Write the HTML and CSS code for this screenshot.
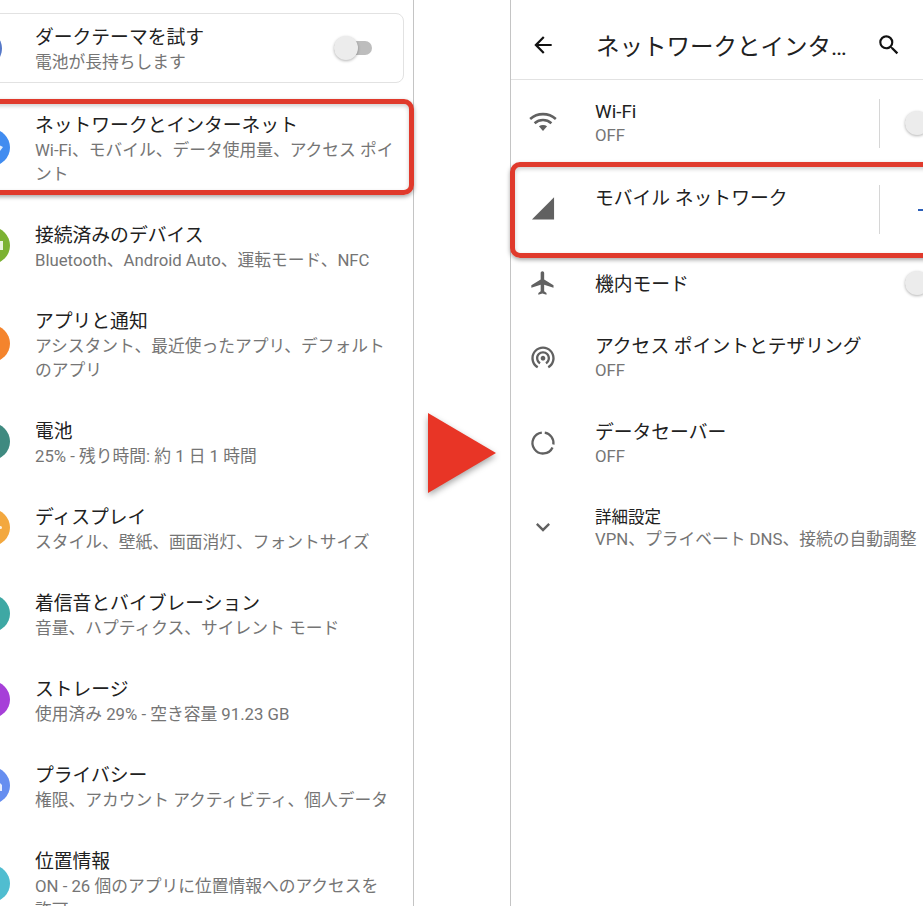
FILE: index.html
```html
<!DOCTYPE html>
<html lang="ja">
<head>
    <meta charset="UTF-8">
    <meta name="viewport" content="width=device-width, initial-scale=1.0">
    <title>ネットワークとインターネット</title>
    <link rel="stylesheet" href="styles.css">
</head>
<body>
    <!-- settings top level -->
    <div class="panel-left">
        <div class="suggest-card">
            <svg class="dot-icon dot-card" viewBox="0 0 37 37"><circle cx="18.5" cy="18.5" r="18.5"/></svg>
            <div class="row-text">
                <div class="row-title">ダークテーマを試す</div>
                <div class="row-sub">電池が長持ちします</div>
            </div>
            <div class="toggle"><div class="toggle-thumb"></div></div>
        </div>

        <div class="set-row marked">
            <svg class="dot-icon dot-blue" viewBox="0 0 37 37"><circle cx="18.5" cy="18.5" r="18.5"/><path class="glyph" d="M27 16.500l3 1.500-3 4z"/></svg>
            <div class="row-text">
                <div class="row-title">ネットワークとインターネット</div>
                <div class="row-sub">Wi-Fi、モバイル、データ使用量、アクセス ポイント</div>
            </div>
            <div class="highlight"></div>
        </div>
        <div class="set-row">
            <svg class="dot-icon dot-green" viewBox="0 0 37 37"><circle cx="18.5" cy="18.5" r="18.5"/><rect class="glyph" x="24" y="14" width="6" height="9"/></svg>
            <div class="row-text">
                <div class="row-title">接続済みのデバイス</div>
                <div class="row-sub">Bluetooth、Android Auto、運転モード、NFC</div>
            </div>
        </div>
        <div class="set-row">
            <svg class="dot-icon dot-orange" viewBox="0 0 37 37"><circle cx="18.5" cy="18.5" r="18.5"/></svg>
            <div class="row-text">
                <div class="row-title">アプリと通知</div>
                <div class="row-sub">アシスタント、最近使ったアプリ、デフォルトのアプリ</div>
            </div>
        </div>
        <div class="set-row">
            <svg class="dot-icon dot-teal" viewBox="0 0 37 37"><circle cx="18.5" cy="18.5" r="18.5"/></svg>
            <div class="row-text">
                <div class="row-title">電池</div>
                <div class="row-sub">25% - 残り時間: 約 1 日 1 時間</div>
            </div>
        </div>
        <div class="set-row">
            <svg class="dot-icon dot-amber" viewBox="0 0 37 37"><circle cx="18.5" cy="18.5" r="18.5"/><circle class="glyph" cx="27.500" cy="18.500" r="1.500"/></svg>
            <div class="row-text">
                <div class="row-title">ディスプレイ</div>
                <div class="row-sub">スタイル、壁紙、画面消灯、フォントサイズ</div>
            </div>
        </div>
        <div class="set-row">
            <svg class="dot-icon dot-sea" viewBox="0 0 37 37"><circle cx="18.5" cy="18.5" r="18.5"/></svg>
            <div class="row-text">
                <div class="row-title">着信音とバイブレーション</div>
                <div class="row-sub">音量、ハプティクス、サイレント モード</div>
            </div>
        </div>
        <div class="set-row">
            <svg class="dot-icon dot-purple" viewBox="0 0 37 37"><circle cx="18.5" cy="18.5" r="18.5"/></svg>
            <div class="row-text">
                <div class="row-title">ストレージ</div>
                <div class="row-sub">使用済み 29% - 空き容量 91.23 GB</div>
            </div>
        </div>
        <div class="set-row">
            <svg class="dot-icon dot-indigo" viewBox="0 0 37 37"><circle cx="18.5" cy="18.5" r="18.5"/><path class="glyph" d="M27 16l2 2v6h-2z"/></svg>
            <div class="row-text">
                <div class="row-title">プライバシー</div>
                <div class="row-sub">権限、アカウント アクティビティ、個人データ</div>
            </div>
        </div>
        <div class="set-row">
            <svg class="dot-icon dot-cyan" viewBox="0 0 37 37"><circle cx="18.5" cy="18.5" r="18.5"/></svg>
            <div class="row-text">
                <div class="row-title">位置情報</div>
                <div class="row-sub">ON - 26 個のアプリに位置情報へのアクセスを許可</div>
            </div>
        </div>
    </div>

    <div class="arrow-col">
        <svg class="next-arrow" viewBox="0 0 68 80"><polygon points="0,0 68,40 0,80"/></svg>
    </div>

    <!-- network detail screen -->
    <div class="panel-right">
        <div class="top-bar">
            <svg class="bar-icon" viewBox="0 0 24 24"><path d="M20 11H7.830l5.590-5.590L12 4l-8 8 8 8 1.410-1.410L7.830 13H20v-2z"/></svg>
            <div class="bar-title">ネットワークとインタ…</div>
            <svg class="bar-icon" viewBox="0 0 24 24"><path d="M15.500 14h-.79l-.28-.27A6.470 6.470 0 0 0 16 9.500 6.500 6.500 0 1 0 9.500 16c1.610 0 3.090-.59 4.230-1.570l.27.28v.79l5 4.990L20.490 19l-4.990-5zm-6 0C7.010 14 5 11.990 5 9.500S7.010 5 9.500 5 14 7.010 14 9.500 11.990 14 9.500 14z"/></svg>
        </div>

        <div class="net-row">
            <svg class="net-icon wifi-icon" viewBox="0 0 24 24"><path d="M1 8.500C7.300 3 16.700 3 23 8.500M4.800 12.200c4.200-3.600 10.200-3.600 14.400 0"/><path class="solid" d="M8.500 14.700c2.100-1.400 4.900-1.400 7 0L12 18.800z"/></svg>
            <div class="row-text wifi-text">
                <div class="row-title">Wi-Fi</div>
                <div class="row-sub">OFF</div>
            </div>
            <div class="net-divider"></div>
            <div class="toggle"><div class="toggle-thumb"></div></div>
        </div>
        <div class="net-row marked">
            <svg class="net-icon" viewBox="0 0 24 24"><path d="M2.500 21h19V2z"/></svg>
            <div class="row-text">
                <div class="row-title">モバイル ネットワーク</div>
            </div>
            <div class="net-divider"></div>
            <div class="plus-mark"></div>
            <div class="highlight"></div>
        </div>
        <div class="net-row plain">
            <svg class="net-icon" viewBox="0 0 24 24"><path d="M21 16v-2l-8-5V3.500c0-.83-.67-1.500-1.500-1.500S10 2.670 10 3.500V9l-8 5v2l8-2.500V19l-2 1.500V22l3.500-1 3.500 1v-1.500L13 19v-5.500l8 2.500z"/></svg>
            <div class="row-text">
                <div class="row-title">機内モード</div>
            </div>
            <div class="toggle"><div class="toggle-thumb"></div></div>
        </div>
        <div class="net-row">
            <svg class="net-icon" viewBox="0 0 24 24"><path d="M12 11c-1.100 0-2 .9-2 2s.9 2 2 2 2-.9 2-2-.9-2-2-2zm6 2c0-3.310-2.690-6-6-6s-6 2.690-6 6c0 2.220 1.210 4.150 3 5.190l1-1.740c-1.190-.7-2-1.970-2-3.450 0-2.210 1.790-4 4-4s4 1.790 4 4c0 1.480-.81 2.750-2 3.450l1 1.740c1.790-1.040 3-2.970 3-5.190zM12 3C6.480 3 2 7.480 2 13c0 3.700 2.010 6.920 4.990 8.650l1-1.730C5.610 18.530 4 15.960 4 13c0-4.420 3.580-8 8-8s8 3.580 8 8c0 2.960-1.610 5.530-4 6.920l1 1.730c2.990-1.730 5-4.950 5-8.650 0-5.520-4.480-10-10-10z"/></svg>
            <div class="row-text">
                <div class="row-title">アクセス ポイントとテザリング</div>
                <div class="row-sub">OFF</div>
            </div>
        </div>
        <div class="net-row">
            <svg class="net-icon saver-icon" viewBox="0 0 24 24"><path d="M11 3.060A9 9 0 1 0 20.160 15.800M13.500 3.130A9 9 0 0 1 20.900 13.300"/></svg>
            <div class="row-text">
                <div class="row-title">データセーバー</div>
                <div class="row-sub">OFF</div>
            </div>
        </div>
        <div class="net-row small">
            <svg class="net-icon" viewBox="0 0 24 24"><path d="M7.410 8.590 12 13.170l4.590-4.580L18 10l-6 6-6-6z"/></svg>
            <div class="row-text">
                <div class="row-title">詳細設定</div>
                <div class="row-sub">VPN、プライベート DNS、接続の自動調整</div>
            </div>
        </div>
    </div>
</body>
</html>
```

FILE: styles.css
```css
* {
    margin: 0;
    padding: 0;
    box-sizing: border-box;
}

body {
    font-family: Roboto, 'Noto Sans CJK JP', sans-serif;
    background: white;
    display: flex;
    height: 906px;
    overflow: hidden;
}

.panel-left {
    flex: none;
    width: 414px;
    padding-top: 13px;
    border-right: 1px solid #c4c4c4;
}

.panel-right {
    flex: none;
    width: 480px;
    border-left: 1px solid #c4c4c4;
}

.arrow-col {
    flex: none;
    width: 96px;
    display: flex;
    align-items: center;
    justify-content: center;
}

.next-arrow {
    width: 68px;
    height: 80px;
    fill: #e83526;
    filter: drop-shadow(0 3px 3px rgba(0,0,0,0.35));
}

.row-title {
    font-size: 18.8px;
    line-height: 24px;
    color: #212121;
}

.row-sub {
    font-size: 16.75px;
    line-height: 24px;
    color: #757575;
}

.suggest-card {
    display: flex;
    align-items: center;
    height: 70px;
    margin: 0 9px 5px -20px;
    border: 1px solid #e2e2e2;
    border-radius: 8px;
}

.suggest-card .dot-icon {
    margin: 0 33px 0 -16px;
}

.suggest-card .row-text {
    flex: 1;
    padding-top: 4px;
}

.suggest-card .toggle {
    margin-right: 31px;
}

.toggle {
    flex: none;
    width: 38px;
    height: 14px;
    border-radius: 7px;
    background: #bdbdbd;
    position: relative;
}

.toggle-thumb {
    position: absolute;
    left: 0;
    top: -5px;
    width: 24px;
    height: 24px;
    border-radius: 50%;
    background: #ececec;
    box-shadow: 0 1px 3px rgba(0,0,0,0.3);
}

.set-row {
    display: flex;
    padding: 26px 19px 12px 0;
    position: relative;
}

.dot-icon {
    flex: none;
    width: 37px;
    height: 37px;
}

.set-row .dot-icon {
    align-self: center;
    margin: -6px 25px 0 -27px;
}

.set-row .row-text {
    flex: 1;
}

.glyph {
    fill: white;
    opacity: 0.85;
}

.dot-card { fill: #5578c8; }
.dot-blue { fill: #418cf0; }
.dot-green { fill: #7cb233; }
.dot-orange { fill: #f4842d; }
.dot-teal { fill: #3f8a80; }
.dot-amber { fill: #f3a83f; }
.dot-sea { fill: #3ea8a4; }
.dot-purple { fill: #a63fd8; }
.dot-indigo { fill: #668ef0; }
.dot-cyan { fill: #50bdd0; }

.highlight {
    position: absolute;
    border: 5px solid #e03a2c;
    border-radius: 10px;
    box-shadow: 0 2px 4px rgba(0,0,0,0.35), inset 0 2px 4px rgba(0,0,0,0.2);
}

.set-row .highlight {
    top: 11px;
    height: 96px;
    left: -20px;
    right: -1px;
}

.net-row .highlight {
    top: -4px;
    height: 96px;
    left: -1px;
    right: -20px;
}

.top-bar {
    display: flex;
    align-items: center;
    height: 80px;
    padding: 10px 0 0 19px;
    border-bottom: 1px solid #e2e2e2;
}

.bar-icon {
    flex: none;
    width: 26px;
    height: 26px;
    fill: #111;
}

.bar-title {
    width: 256px;
    margin: 0 24px 0 40px;
    font-size: 23.5px;
    color: #212121;
    white-space: nowrap;
}

.net-row {
    display: flex;
    align-items: center;
    height: 86px;
    padding-left: 18px;
    position: relative;
}

.net-row.plain {
    height: 62px;
}

.net-row.small {
    height: 82px;
}

.net-row .row-text {
    width: 284px;
    flex: none;
    margin-left: 38px;
    align-self: flex-start;
    padding-top: 21px;
}

.net-row .row-sub {
    line-height: 22px;
}

.net-row .wifi-text {
    padding-top: 20px;
}

.net-row.plain .row-text {
    align-self: center;
    padding-top: 4px;
}

.net-row.small .row-text {
    width: 340px;
    padding-top: 21px;
}

.net-row.small .row-title {
    font-size: 16.5px;
    line-height: 22px;
}

.net-row.small .row-sub {
    font-size: 16.75px;
    line-height: 21px;
}

.net-icon {
    flex: none;
    width: 28px;
    height: 28px;
    fill: #616161;
}

.wifi-icon {
    fill: none;
    stroke: #616161;
    stroke-width: 2.2px;
}

.wifi-icon .solid {
    fill: #616161;
    stroke: none;
}

.saver-icon {
    fill: none;
    stroke: #616161;
    stroke-width: 2px;
}

.net-divider {
    flex: none;
    width: 1px;
    height: 49px;
    background: #d6d6d6;
    margin-right: 25px;
}

.net-row.plain .toggle {
    margin-left: 26px;
}

.plus-mark {
    flex: none;
    width: 7px;
    height: 2px;
    margin: 0 0 -2px 13px;
    background: #2c5fb8;
}
```
